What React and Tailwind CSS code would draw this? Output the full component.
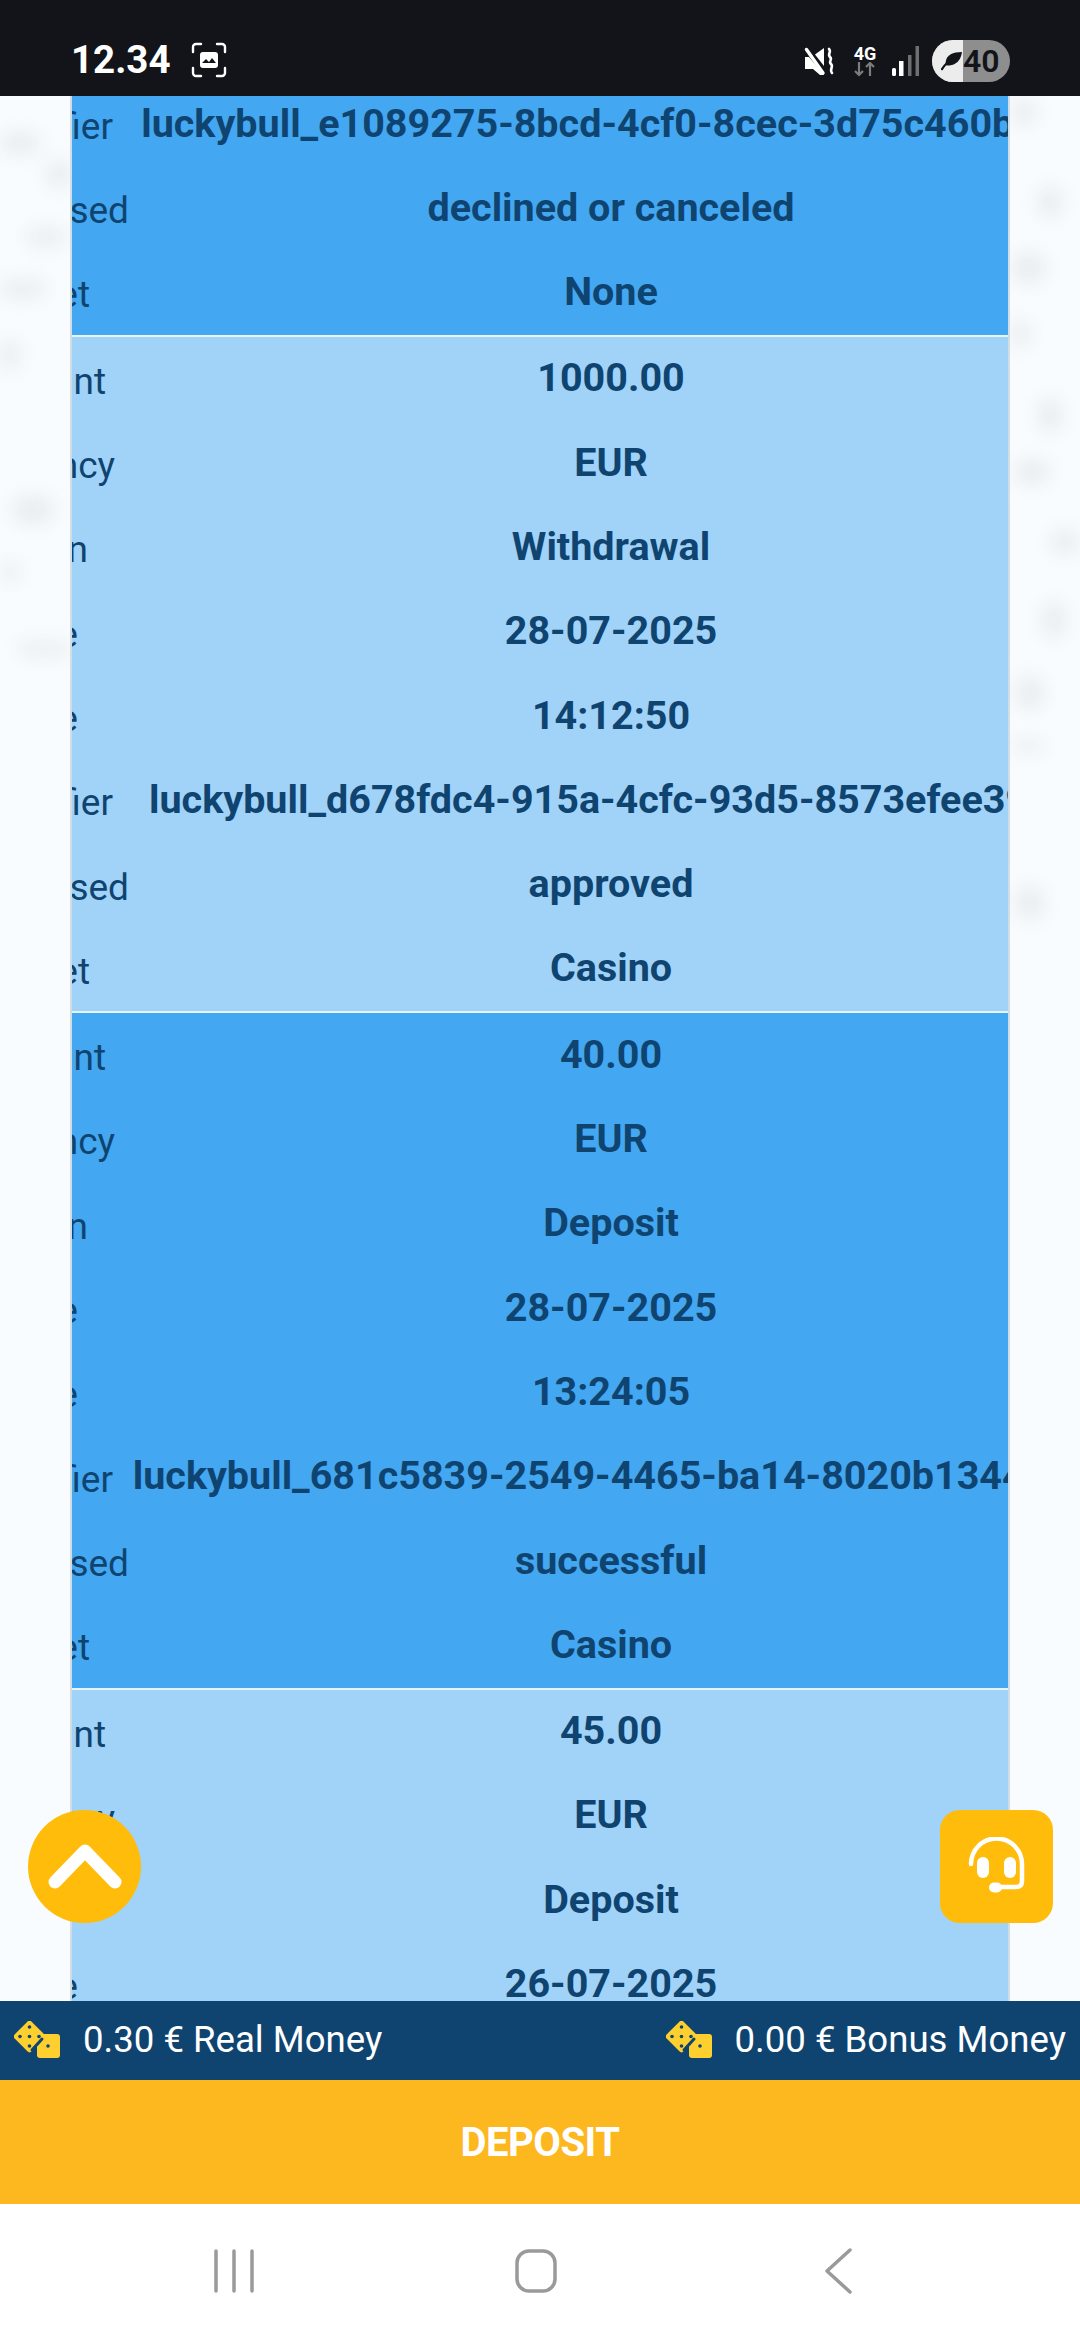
const groups = [
  { bg: "bg-[#44a7f1]", values: [null, null, null, null, null, "luckybull_e1089275-8bcd-4cf0-8cec-3d75c460b9a1", "declined or canceled", "None"] },
  { bg: "bg-[#a1d2f8]", values: ["1000.00", "EUR", "Withdrawal", "28-07-2025", "14:12:50", "luckybull_d678fdc4-915a-4cfc-93d5-8573efee39b2", "approved", "Casino"] },
  { bg: "bg-[#44a7f1]", values: ["40.00", "EUR", "Deposit", "28-07-2025", "13:24:05", "luckybull_681c5839-2549-4465-ba14-8020b1344c7e", "successful", "Casino"] },
  { bg: "bg-[#a1d2f8]", values: ["45.00", "EUR", "Deposit", "26-07-2025", "11:02:37", "luckybull_0b7e4a12-6c3d-4f8a-9e21-7d5c1a90b3f4", "successful", "Casino"] },
];

const labels = [
  { text: "Amount", pad: "pr-[25px]" },
  { text: "Currency", pad: "pr-[16px]" },
  { text: "Transaction", pad: "pr-[43px]" },
  { text: "Date", pad: "pr-[53px]" },
  { text: "Time", pad: "pr-[53px]" },
  { text: "Identifier", pad: "pr-[18px]" },
  { text: "Processed", pad: "pr-[2px]" },
  { text: "Wallet", pad: "pr-[41px]" },
];

const blobs = [
  "left-0 top-[36px] h-[22px] w-[40px]",
  "left-[46px] top-[64px] h-[28px] w-[26px]",
  "left-[26px] top-[132px] h-[18px] w-[40px]",
  "left-0 top-[184px] h-[18px] w-[46px]",
  "left-0 top-[244px] h-[30px] w-[20px]",
  "left-[12px] top-[400px] h-[28px] w-[42px]",
  "left-0 top-[466px] h-[20px] w-[20px]",
  "left-[18px] top-[546px] h-[14px] w-[52px]",
  "left-[1012px] top-[2px] h-[28px] w-[24px]",
  "left-[1038px] top-[90px] h-[32px] w-[24px]",
  "left-[1012px] top-[156px] h-[32px] w-[34px]",
  "left-[1012px] top-[224px] h-[28px] w-[18px]",
  "left-[1038px] top-[302px] h-[34px] w-[24px]",
  "left-[1014px] top-[364px] h-[24px] w-[36px]",
  "left-[1050px] top-[434px] h-[24px] w-[30px]",
  "left-[1042px] top-[506px] h-[36px] w-[24px]",
  "left-[1016px] top-[580px] h-[34px] w-[28px]",
  "left-[1012px] top-[644px] h-[12px] w-[32px]",
  "left-[1016px] top-[790px] h-[34px] w-[28px]",
];

function Row({ label, value }) {
  return (
    <div className="flex h-[84.3px] shrink-0 items-center text-[#0f4470]">
      <div className={`flex w-[59px] shrink-0 justify-end whitespace-nowrap pt-[5px] text-[37px] font-normal ${label.pad}`}>
        {label.text}
      </div>
      <div className="flex w-[960px] shrink-0 justify-center whitespace-nowrap pb-[2px] text-[39.5px] font-bold">
        {value}
      </div>
    </div>
  );
}

function Dice() {
  return (
    <svg width="46" height="38" viewBox="0 0 46 38" className="shrink-0">
      <rect x="23" y="13" width="23" height="24" rx="3" fill="#fdcf2f" />
      <rect x="3.5" y="3.5" width="24" height="24" rx="3" transform="rotate(45 15.5 15.5)" fill="#fdcf2f" />
      <path d="M28 18L18 29" stroke="#0f4470" strokeWidth="3" strokeLinecap="round" />
      <g fill="#0f4470">
        <circle cx="15.5" cy="6" r="1.8" /><circle cx="15.5" cy="15.5" r="1.8" /><circle cx="15.5" cy="25" r="1.8" />
        <circle cx="6" cy="15.5" r="1.8" /><circle cx="25" cy="15.5" r="1.8" />
        <circle cx="34" cy="25" r="1.8" />
      </g>
    </svg>
  );
}

function StatusBar() {
  return (
    <div className="flex h-[96px] shrink-0 items-start justify-between bg-[#121419] pl-[71px] pr-[70px] pt-[40px]">
      <div className="flex items-center gap-[20px]">
        <span className="text-[38.5px] font-bold leading-[40px] text-white">12.34</span>
        <svg width="36" height="36" viewBox="0 0 36 36" fill="none">
          <path d="M2 10V5a3 3 0 0 1 3-3h5M26 2h5a3 3 0 0 1 3 3v5M34 26v5a3 3 0 0 1-3 3h-5M10 34H5a3 3 0 0 1-3-3v-5" stroke="#fff" strokeWidth="2.4" strokeLinecap="round" />
          <rect x="9" y="10" width="18" height="16" rx="3" fill="#fff" />
          <path d="M11 21l4-4 3 3 3-4 4 5z" fill="#121419" />
        </svg>
      </div>
      <div className="flex items-center">
        <svg width="31" height="29" viewBox="0 0 31 29" className="mr-[17px]">
          <path d="M1 10h4l15 18h-4l-7-6H1z" fill="#fff" />
          <path d="M11 7.5L20 1v18z" fill="#fff" />
          <path d="M2.5 2.5L19 26" stroke="#fff" strokeWidth="3.4" strokeLinecap="round" />
          <path d="M25 2c3 3-2 5 1 8s-2 4 1 7-2 5 1 9" stroke="#fff" strokeWidth="2.6" fill="none" strokeLinecap="round" />
        </svg>
        <div className="mr-[13px] flex w-[26px] flex-col items-center text-white">
          <span className="text-[18px] font-bold leading-[17px]">4G</span>
          <svg width="24" height="15" viewBox="0 0 24 15" fill="none" stroke="#7c7c7c" strokeWidth="2.2">
            <path d="M6 0v13M2 9l4 4 4-4M17 14V1M13 5l4-4 4 4" />
          </svg>
        </div>
        <svg width="28" height="32" viewBox="0 0 28 32" className="mr-[13px]">
          <rect x="1" y="23" width="4" height="8" rx="1.5" fill="#fff" />
          <rect x="8" y="16" width="4.5" height="15" fill="#fff" />
          <rect x="17" y="10" width="3.5" height="21" fill="#6f6f6f" />
          <rect x="24.5" y="1" width="3.5" height="30" fill="#6f6f6f" />
        </svg>
        <div className="flex h-[42px] w-[78px] items-center overflow-hidden rounded-full bg-[#8e8e8e]">
          <div className="flex h-full w-[31px] shrink-0 items-center justify-end bg-[#ececec]">
            <svg width="22" height="20" viewBox="0 0 24 22">
              <path d="M23 1C13 1 6 4 5 12c0 2 .5 3 1 4 5 0 15-1 17-15z" fill="#121419" />
              <path d="M1 20c3-5 7-9 12-11" stroke="#121419" strokeWidth="2.4" fill="none" strokeLinecap="round" />
            </svg>
          </div>
          <span className="text-[32px] font-semibold leading-none text-[#121419]">40</span>
        </div>
      </div>
    </div>
  );
}

export default function App() {
  return (
    <div className="relative flex h-[2340px] w-[1080px] flex-col overflow-hidden bg-white font-['Roboto',sans-serif]">
      <StatusBar />
      <div className="relative flex min-h-0 flex-1 justify-center overflow-hidden bg-[#f9fcfe]">
        {blobs.map((b) => (
          <span key={b} className={`absolute rounded-full bg-[#e9edef] blur-[9px] ${b}`} />
        ))}
        <div className="relative h-full w-[940px] overflow-hidden border-x-2 border-[#d3dde4]">
          <div className="-mt-[14px]">
            {groups.map((g, i) => (
              <div key={i} className={`${g.bg} border-b-2 border-[#e6f4fc]`}>
                {g.values.map((v, j) =>
                  v === null ? null : <Row key={j} label={labels[j]} value={v} />
                )}
              </div>
            ))}
          </div>
        </div>
      </div>

      <div className="flex h-[79px] shrink-0 items-center justify-between bg-[#0f4470] pl-[14px] pr-[14px] text-[36.6px] text-white">
        <div className="flex items-center gap-[23px]"><Dice /><span>0.30 € Real Money</span></div>
        <div className="flex items-center gap-[23px]"><Dice /><span>0.00 € Bonus Money</span></div>
      </div>
      <div className="flex h-[124px] shrink-0 items-start justify-center bg-[#fdb71f] pt-[41px] text-[40px] font-bold leading-[44px] text-white">
        <span className="tracking-[-0.5px]">DEPOSIT</span>
      </div>
      <div className="flex h-[136px] shrink-0 items-center bg-white pb-[3px] pl-[212px]">
        <svg width="44" height="44" viewBox="0 0 44 44" fill="none" stroke="#9a9a9a" strokeWidth="3.5" strokeLinecap="round">
          <path d="M4 2v40M22 2v40M40 2v40" />
        </svg>
        <svg width="42" height="44" viewBox="0 0 42 44" fill="none" stroke="#9a9a9a" strokeWidth="3.5" className="ml-[259px]">
          <rect x="2" y="2" width="38" height="40" rx="12" />
        </svg>
        <svg width="34" height="46" viewBox="0 0 34 46" fill="none" stroke="#9a9a9a" strokeWidth="3.5" strokeLinecap="round" strokeLinejoin="round" className="ml-[264px]">
          <path d="M29 2L6 23l23 21" />
        </svg>
      </div>

      <button className="absolute left-[28px] top-[1810px] flex h-[113px] w-[113px] items-center justify-center rounded-full bg-[#ffbc0a]">
        <svg width="76" height="52" viewBox="0 0 76 52" fill="none" stroke="#fff" strokeWidth="13" strokeLinecap="round" strokeLinejoin="round">
          <path d="M8 41L38 10l30 31" />
        </svg>
      </button>
      <button className="absolute left-[940px] top-[1810px] flex h-[113px] w-[113px] items-center justify-center rounded-[20px] bg-[#ffbc0a]">
        <svg width="60" height="60" viewBox="0 0 60 60" fill="none">
          <path d="M4 27A25.5 25.5 0 0 1 55 27V44Q55 50 49 50H30" stroke="#fff" strokeWidth="4.5" strokeLinecap="round" />
          <rect x="10" y="20" width="12" height="21" rx="6" fill="#fff" />
          <rect x="37" y="20" width="12" height="21" rx="6" fill="#fff" />
          <rect x="22" y="45.5" width="13" height="10" rx="5" fill="#fff" />
        </svg>
      </button>
    </div>
  );
}
